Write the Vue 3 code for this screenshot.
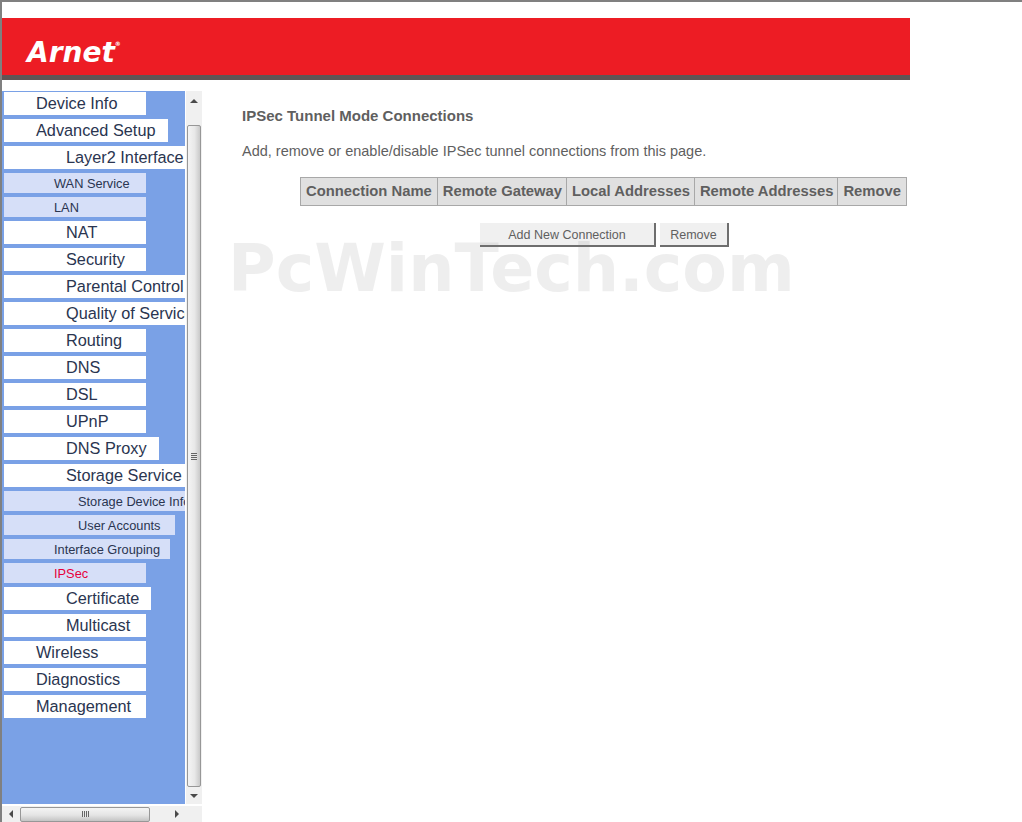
<script setup>
const menu = [
  { t: 'Device Info', l: 1 },
  { t: 'Advanced Setup', l: 1 },
  { t: 'Layer2 Interface', l: 2 },
  { t: 'WAN Service', l: 3 },
  { t: 'LAN', l: 3 },
  { t: 'NAT', l: 2 },
  { t: 'Security', l: 2 },
  { t: 'Parental Control', l: 2 },
  { t: 'Quality of Service', l: 2 },
  { t: 'Routing', l: 2 },
  { t: 'DNS', l: 2 },
  { t: 'DSL', l: 2 },
  { t: 'UPnP', l: 2 },
  { t: 'DNS Proxy', l: 2 },
  { t: 'Storage Service', l: 2 },
  { t: 'Storage Device Info', l: 4 },
  { t: 'User Accounts', l: 4 },
  { t: 'Interface Grouping', l: 3 },
  { t: 'IPSec', l: 3, active: true },
  { t: 'Certificate', l: 2 },
  { t: 'Multicast', l: 2 },
  { t: 'Wireless', l: 1 },
  { t: 'Diagnostics', l: 1 },
  { t: 'Management', l: 1 }
]
const columns = ['Connection Name', 'Remote Gateway', 'Local Addresses', 'Remote Addresses', 'Remove']
</script>

<template>
  <div class="window">
    <header class="banner">
      <div class="logo">Arnet<sup class="reg">®</sup></div>
    </header>
    <div class="body">
      <aside class="side">
        <div class="side-top">
          <nav class="menu">
            <div v-for="m in menu" :key="m.t" class="row">
              <a :class="['item', 'l' + m.l, { active: m.active }]">{{ m.t }}</a>
            </div>
          </nav>
          <div class="vbar">
            <div class="btn"><span class="arrow up"></span></div>
            <div class="vthumb"><span class="grip"></span></div>
            <div class="btn down"><span class="arrow dn"></span></div>
          </div>
        </div>
        <div class="hbar">
          <span class="arrow lf"></span>
          <div class="hthumb"><span class="hgrip"></span></div>
          <span class="arrow rt"></span>
        </div>
      </aside>
      <main class="content">
        <h1 class="title">IPSec Tunnel Mode Connections</h1>
        <p class="desc">Add, remove or enable/disable IPSec tunnel connections from this page.</p>
        <div class="table-wrap">
          <table class="conn">
            <tbody>
              <tr>
                <td v-for="c in columns" :key="c">{{ c }}</td>
              </tr>
            </tbody>
          </table>
        </div>
        <div class="actions">
          <button class="b wide">Add New Connection</button>
          <button class="b">Remove</button>
        </div>
        <div class="mark">PcWinTech.com</div>
      </main>
    </div>
  </div>
</template>

<style>
html, body { margin: 0; padding: 0; background: #fff; overflow: hidden; }
</style>

<style scoped>
.window {
  width: 1022px;
  height: 822px;
  box-sizing: border-box;
  border-top: 2px solid #808080;
  border-left: 2px solid #808080;
  padding-top: 16px;
  display: flex;
  flex-direction: column;
  font-family: "Liberation Sans", Arial, sans-serif;
  background: #fff;
  overflow: hidden;
}
.banner {
  width: 908px;
  height: 62px;
  flex: none;
  box-sizing: border-box;
  background: #ed1c24;
  border-bottom: 5px solid #615555;
  padding: 20px 0 0 25px;
}
.logo {
  color: #fff;
  font-family: "DejaVu Sans", sans-serif;
  font-weight: bold;
  font-style: italic;
  font-size: 28px;
  line-height: 30px;
  width: 92px;
  white-space: nowrap;
}
.reg {
  font-size: 6px;
  line-height: 0;
  vertical-align: 16px;
  font-style: normal;
}
.body {
  flex: 1;
  display: flex;
  padding-top: 11px;
  min-height: 0;
}
.side {
  width: 200px;
  flex: none;
  display: flex;
  flex-direction: column;
}
.side-top {
  flex: 1;
  display: flex;
  min-height: 0;
}
.menu {
  width: 183px;
  flex: none;
  background: #7aa1e6;
  overflow: hidden;
  padding: 1px 0 0 2px;
  box-sizing: border-box;
  margin-right: 1px;
}
.row {
  white-space: nowrap;
  margin-bottom: 4px;
  height: 23px;
}
.row:has(.l3), .row:has(.l4) { height: 20px; }
.item {
  display: inline-block;
  box-sizing: border-box;
  min-width: 142px;
  height: 23px;
  line-height: 23px;
  background: #fff;
  color: #2a3550;
  font-size: 16.3px;
  padding-right: 12px;
  vertical-align: top;
}
.l1 { padding-left: 32px; }
.l2 { padding-left: 62px; }
.l3, .l4 {
  height: 20px;
  line-height: 21px;
  background: #d6dff8;
  font-size: 12.8px;
  padding-right: 10px;
}
.l3 { padding-left: 50px; }
.l4 { padding-left: 74px; padding-right: 14px; }
.active { color: #e6003c; }
.vbar {
  width: 16px;
  flex: none;
  background: #f0f0f0;
  display: flex;
  flex-direction: column;
}
.btn {
  height: 34px;
  flex: none;
  display: flex;
  justify-content: center;
  padding-top: 8px;
  box-sizing: border-box;
}
.btn.down {
  height: 17px;
  padding-top: 7px;
}
.vthumb {
  flex: 1;
  box-sizing: border-box;
  border: 1px solid #979797;
  border-radius: 2px;
  margin: 0 0 0 1px;
  width: 14px;
  background: linear-gradient(to right, #f4f4f4, #e8e8e8 55%, #c9c9c9);
  display: flex;
  align-items: center;
  justify-content: center;
}
.grip {
  width: 6px;
  height: 7px;
  background: repeating-linear-gradient(to bottom, #666 0 1px, #e8e8e8 1px 2px);
}
.arrow {
  width: 0;
  height: 0;
  display: block;
}
.arrow.up {
  border-left: 4px solid transparent;
  border-right: 4px solid transparent;
  border-bottom: 4px solid #4a4a4a;
}
.arrow.dn {
  border-left: 4px solid transparent;
  border-right: 4px solid transparent;
  border-top: 4px solid #4a4a4a;
}
.arrow.lf {
  border-top: 4px solid transparent;
  border-bottom: 4px solid transparent;
  border-right: 4px solid #4a4a4a;
}
.arrow.rt {
  border-top: 4px solid transparent;
  border-bottom: 4px solid transparent;
  border-left: 4px solid #4a4a4a;
}
.hbar {
  height: 16px;
  flex: none;
  margin-top: 2px;
  background: #f0f0f0;
  display: flex;
  align-items: center;
  padding-left: 7px;
  box-sizing: border-box;
  width: 200px;
}
.hthumb {
  width: 130px;
  height: 15px;
  box-sizing: border-box;
  margin: 0 25px 0 7px;
  border: 1px solid #979797;
  border-radius: 2px;
  background: linear-gradient(to bottom, #f4f4f4, #e4e4e4 55%, #c4c4c4);
  display: flex;
  align-items: center;
  justify-content: center;
}
.hgrip {
  width: 7px;
  height: 6px;
  background: repeating-linear-gradient(to right, #666 0 1px, #e8e8e8 1px 2px);
}
.content {
  position: relative;
  flex: 1;
  padding: 17px 0 0 40px;
  color: #5f5f5f;
}
.title {
  margin: 0;
  font-size: 15px;
  line-height: 16px;
  font-weight: bold;
}
.desc {
  margin: 19px 0 0;
  font-size: 14.5px;
  line-height: 16px;
}
.table-wrap {
  margin: 18px 0 0 58px;
}
.conn {
  border-collapse: separate;
  border-spacing: 0;
  border: 1px solid #a8a8a8;
  border-width: 1px 0 1px 1px;
  background: #fff;
}
.conn td {
  background: #e0e0e0;
  border-right: 1px solid #a8a8a8;
  height: 27px;
  padding: 0 4px 2px 5px;
  box-sizing: border-box;
  font-size: 14.8px;
  font-weight: bold;
  white-space: nowrap;
}
.conn td:first-child, .conn td:last-child { padding-right: 5px; }
.actions {
  margin: 17px 0 0 238px;
  display: flex;
  gap: 4px;
}
.b {
  height: 24px;
  box-sizing: border-box;
  background: #f0f0f0;
  border: 0;
  border-right: 2px solid #6e6e6e;
  border-bottom: 2px solid #6e6e6e;
  font-family: "Liberation Sans", Arial, sans-serif;
  font-size: 12.5px;
  color: #5f5f5f;
  padding: 1px 0 0;
  width: 69px;
}
.wide { width: 176px; }
.mark {
  position: absolute;
  left: 26px;
  top: 140px;
  font-family: "DejaVu Sans", sans-serif;
  font-weight: bold;
  font-size: 65px;
  line-height: 76px;
  color: rgba(120, 120, 120, 0.13);
  white-space: nowrap;
  pointer-events: none;
}
</style>
